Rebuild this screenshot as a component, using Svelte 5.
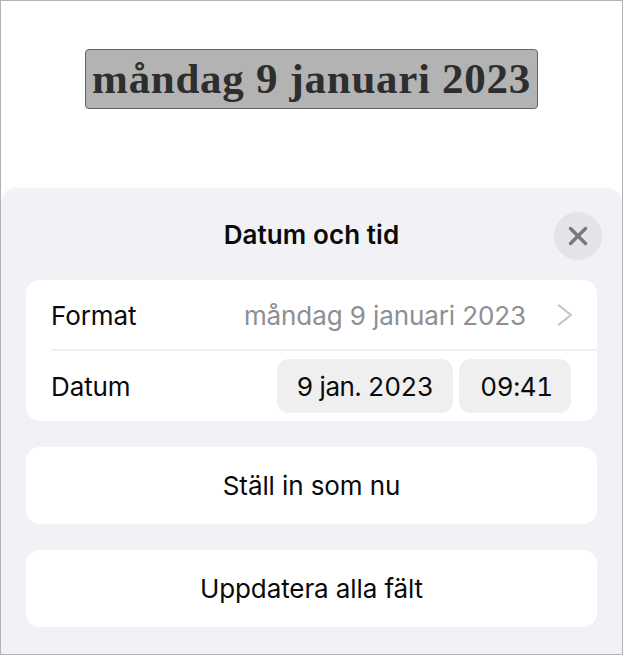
<script>
    const fieldText = 'måndag 9 januari 2023'
</script>

<div class="frame">
    <div class="canvas">
        <span class="selected-field">{fieldText}</span>
    </div>

    <div class="sheet">
        <div class="sheet-header">
            <h1>Datum och tid</h1>
            <button class="close" aria-label="Stäng">
                <svg width="20" height="20" viewBox="0 0 20 20">
                    <path d="M2.5 2.5 L17.5 17.5 M17.5 2.5 L2.5 17.5" />
                </svg>
            </button>
        </div>

        <div class="card">
            <div class="row format-row">
                <span class="label">Format</span>
                <span class="value">{fieldText}</span>
                <svg class="chevron" width="16" height="22" viewBox="0 0 16 22">
                    <path d="M2 1.5 L14 11 L2 20.5" />
                </svg>
            </div>
            <div class="row date-row">
                <span class="label">Datum</span>
                <div class="pills">
                    <span class="pill date-pill">9 jan. 2023</span>
                    <span class="pill time-pill">09:41</span>
                </div>
            </div>
        </div>

        <button class="action">Ställ in som nu</button>
        <button class="action">Uppdatera alla fält</button>
    </div>
</div>

<style>
    :global(body) {
        background: #ffffff;
    }

    .frame {
        width: 623px;
        height: 655px;
        box-sizing: border-box;
        border: 1px solid #b3b3b5;
        background: #ffffff;
        display: flex;
        flex-direction: column;
        overflow: hidden;
        font-family: Inter, "Liberation Sans", sans-serif;
        color: #0a0a0a;
    }

    .canvas {
        height: 187px;
        flex: none;
        display: flex;
        justify-content: center;
        box-sizing: border-box;
        padding-top: 48px;
    }

    .selected-field {
        width: 453px;
        height: 60px;
        box-sizing: border-box;
        border: 1px solid #636363;
        border-radius: 4px;
        background: #b3b3b3;
        color: #2e2e2e;
        font-family: "Liberation Serif", serif;
        font-weight: 700;
        font-size: 43px;
        letter-spacing: 0.7px;
        line-height: 58px;
        text-align: center;
        white-space: nowrap;
    }

    .sheet {
        flex: 1;
        background: #f1f1f6;
        border-radius: 16px 16px 0 0;
        box-shadow: 0 -1px 4px rgba(0, 0, 0, 0.03);
        padding: 0 25px;
        display: flex;
        flex-direction: column;
    }

    .sheet-header {
        height: 92px;
        flex: none;
        position: relative;
        display: flex;
        justify-content: center;
        box-sizing: border-box;
        padding-top: 31px;
    }

    h1 {
        margin: 0;
        font-size: 26px;
        font-weight: 600;
        line-height: 32px;
        letter-spacing: 0.1px;
    }

    .close {
        position: absolute;
        top: 24px;
        right: -5px;
        width: 48px;
        height: 48px;
        padding: 0;
        border: none;
        border-radius: 50%;
        background: #e3e3e8;
        display: flex;
        align-items: center;
        justify-content: center;
    }

    .close path {
        stroke: #77777c;
        stroke-width: 3.4;
        stroke-linecap: round;
        fill: none;
    }

    .card {
        background: #ffffff;
        border-radius: 14px;
        height: 141px;
        flex: none;
        display: flex;
        flex-direction: column;
    }

    .row {
        display: flex;
        align-items: center;
        margin-left: 25px;
    }

    .format-row {
        height: 68px;
        padding-top: 1px;
        flex: none;
        border-bottom: 2px solid #f0f0f2;
        padding-right: 24px;
    }

    .date-row {
        flex: 1;
        padding-right: 26px;
    }

    .label {
        font-size: 26px;
        letter-spacing: -0.1px;
    }

    .value {
        margin-left: auto;
        margin-right: 31px;
        font-size: 26px;
        letter-spacing: -0.1px;
        color: #8e8e93;
    }

    .chevron path {
        stroke: #c4c4c7;
        stroke-width: 2.2;
        stroke-linecap: round;
        stroke-linejoin: round;
        fill: none;
    }

    .pills {
        margin-left: auto;
        display: flex;
        gap: 6px;
    }

    .pill {
        height: 54px;
        background: #efefef;
        border-radius: 12px;
        font-size: 26px;
        letter-spacing: -0.4px;
        font-variant-numeric: tabular-nums;
        display: flex;
        align-items: center;
        justify-content: center;
    }

    .date-pill {
        width: 176px;
    }

    .time-pill {
        width: 112px;
        padding-left: 3px;
        box-sizing: border-box;
    }

    .action {
        height: 77px;
        flex: none;
        margin-top: 26px;
        border: none;
        border-radius: 14px;
        background: #ffffff;
        color: #0a0a0a;
        font-family: inherit;
        font-size: 26px;
        letter-spacing: -0.1px;
        padding: 0;
    }
</style>
